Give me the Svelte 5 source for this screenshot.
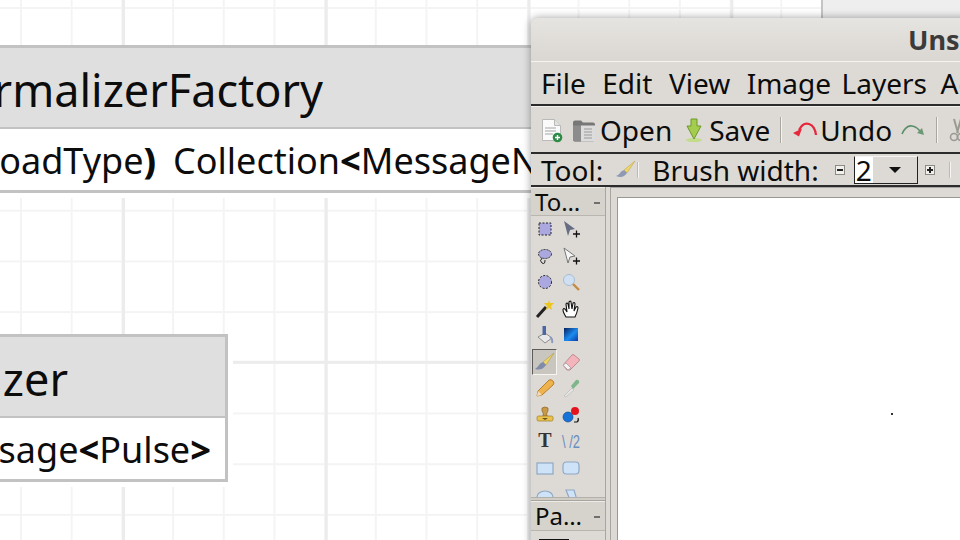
<script>
  const menus = ['File', 'Edit', 'View', 'Image', 'Layers', 'Adjust'];
</script>

<div class="desk">
  <div class="far-window"></div>

  <div class="card card-a">
    <div class="title">MessageNormalizerFactory</div>
    <div class="row"><span class="lead">create(PayloadType<b>)</b></span><span>Collection<b>&lt;</b>MessageNormalizer<b>&lt;</b>Pulse<b>&gt;&gt;</b></span></div>
  </div>

  <div class="card card-b">
    <div class="title">MessageNormalizer</div>
    <div class="row"><span>Message<b>&lt;</b>Pulse<b>&gt;</b></span></div>
  </div>

  <div class="window">
    <div class="titlebar"><span>Unsaved Drawing</span></div>

    <div class="menubar">
      {#each menus as m}
        <span>{m}</span>
      {/each}
    </div>

    <div class="toolbar">
      <svg class="ico new" width="24" height="26" viewBox="0 0 24 26">
        <path d="M2.5 2.5h12l6 6v15h-18z" fill="#fafafa" stroke="#b9b9b9" />
        <path d="M14.5 2.5v6h6" fill="#e4e4e4" stroke="#b9b9b9" />
        <path d="M5 11h11M5 14h11M5 17h8" stroke="#a5a5a5" />
        <circle cx="17.5" cy="20.5" r="4.8" fill="#2e8b47" />
        <path d="M15 20.5h5M17.5 18v5" stroke="#fff" stroke-width="1.4" />
      </svg>
      <svg class="ico folder" width="24" height="26" viewBox="0 0 24 26">
        <path d="M1 5.5q0-2 2-2h6l2 2h10q2 0 2 2v15q0 2-2 2H3q-2 0-2-2z" fill="#777" />
        <path d="M9 8.500h14v16H9z" fill="#dcdcdc" />
        <path d="M12 12h8M12 15h8M12 18h8M12 21h8" stroke="#9a9a9a" />
        <path d="M1 8.500h8v16H3q-2 0-2-2z" fill="#8c8c8c" />
      </svg>
      <span class="tb-label open">Open</span>
      <svg class="ico save" width="18" height="26" viewBox="0 0 18 26">
        <ellipse cx="9" cy="23" rx="8" ry="2" fill="#c3dc8c" />
        <path d="M6 2h6v7h4l-7 13-7-13h4z" fill="#a4cc4e" stroke="#6c9a26" />
      </svg>
      <span class="tb-label save-l">Save</span>
      <i class="sep s1"></i>
      <svg class="ico undo" width="26" height="24" viewBox="0 0 26 24">
        <path d="M7 12q4-8 10-6t7 11" fill="none" stroke="#e6283c" stroke-width="2.200" />
        <path d="M1 15l9-4.500-3 8z" fill="#e6283c" />
      </svg>
      <span class="tb-label undo-l">Undo</span>
      <svg class="ico redo" width="26" height="24" viewBox="0 0 26 24">
        <path d="M2 16q4-9 10-8t9 7" fill="none" stroke="#5b8f6a" stroke-width="1.600" />
        <path d="M24 17l-7-2 5-5z" fill="#6d9878" />
      </svg>
      <i class="sep s2"></i>
      <svg class="ico cut" width="18" height="26" viewBox="0 0 18 26">
        <path d="M5 2l4 14M12 2l-4 14" stroke="#9a9a92" stroke-width="2" />
        <circle cx="5" cy="20" r="3.500" fill="none" stroke="#9a9a92" stroke-width="1.600" />
        <circle cx="12" cy="20" r="3.500" fill="none" stroke="#9a9a92" stroke-width="1.600" />
      </svg>
    </div>

    <div class="options">
      <span class="opt-l tool-l">Tool:</span>
      <svg class="ico brush" width="20" height="20" viewBox="0 0 20 20">
        <path d="M19 1L8 10l3 3z" fill="#ecd56c" stroke="#b79e3c" stroke-width=".5" />
        <path d="M8 10q-3 1-4 3t-4 3q7 3 11-3z" fill="#8e9ab4" />
      </svg>
      <i class="mini-sep"></i>
      <span class="opt-l brush-l">Brush width:</span>
      <span class="step minus"><i></i></span>
      <div class="combo">
        <span class="entry">2</span>
        <span class="drop"><i></i></span>
      </div>
      <span class="step plus"><i></i><i class="v"></i></span>
      <i class="mini-sep far"></i>
    </div>

    <div class="main">
      <div class="dock">
        <div class="panel-head">To… <em></em></div>
        <div class="tools">
          <div class="tool"><svg viewBox="0 0 20 20"><rect x="4" y="4" width="12" height="12" fill="#aaa8de" stroke="#222" stroke-dasharray="2 1.500" /></svg></div>
          <div class="tool"><svg viewBox="0 0 20 20"><path d="M3 2l11 8-5 1-2 6z" fill="#656c84" /><path d="M12 15h7M15.500 11.500v7" stroke="#111" stroke-width="1.300" /></svg></div>

          <div class="tool"><svg viewBox="0 0 20 20"><ellipse cx="10" cy="8" rx="6.500" ry="4.500" fill="#aaa8de" stroke="#333" stroke-dasharray="2 1" /><path d="M7 12q-3 3 0 5t3-3" fill="none" stroke="#222" /></svg></div>
          <div class="tool"><svg viewBox="0 0 20 20"><path d="M3 2l11 8-5 1-2 6z" fill="#f5f5f5" stroke="#777" /><path d="M12 15h7M15.500 11.500v7" stroke="#111" stroke-width="1.300" /></svg></div>

          <div class="tool"><svg viewBox="0 0 20 20"><circle cx="10" cy="10" r="6.500" fill="#aaa8de" stroke="#222" stroke-dasharray="2 1.500" /></svg></div>
          <div class="tool"><svg viewBox="0 0 20 20"><circle cx="8" cy="8" r="5.500" fill="#cfe0f2" stroke="#a9bdd3" /><path d="M12 12l6 6" stroke="#c68a45" stroke-width="2.400" /></svg></div>

          <div class="tool"><svg viewBox="0 0 20 20"><path d="M2 18L11 8" stroke="#222" stroke-width="3" /><path d="M14 1l1 3 4 0-3 3 1 4-3-2-3 2 1-4-3-3h4z" fill="#ecc51f" /></svg></div>
          <div class="tool"><svg viewBox="0 0 20 20"><path d="M5 18q-3-5-3-7t2-1l2 3-1-8q1-2 2 0l1 5 0-7q2-2 2 0l1 7 1-6q2-1 2 1l-1 7 2-4q2-1 2 1-1 5-3 9z" fill="#fff" stroke="#111" stroke-width="1.100" /></svg></div>

          <div class="tool"><svg viewBox="0 0 20 20"><path d="M3 12l7-4 7 5-7 5z" fill="#e8e8e8" stroke="#8e8e8e" /><path d="M7.500 1h3.500v9H7.500z" fill="#4a68a8" /><path d="M15 12q3 2 2 6" fill="none" stroke="#8a9bc0" stroke-width="2" /></svg></div>
          <div class="tool"><svg viewBox="0 0 20 20"><defs><linearGradient id="gr" x1="0" y1="0" x2="1" y2="1"><stop offset="0" stop-color="#06205e" /><stop offset=".55" stop-color="#1b8cf0" /><stop offset="1" stop-color="#0a3aa8" /></linearGradient></defs><rect x="3" y="3" width="14" height="13" fill="url(#gr)" /></svg></div>

          <div class="tool on"><svg viewBox="0 0 20 20"><path d="M19 1L8 10l3 3z" fill="#ecd56c" stroke="#b3993a" stroke-width=".6" /><path d="M8 10q-3 1-4 3t-4 4q7 2 11-4z" fill="#7f8ba8" /></svg></div>
          <div class="tool"><svg viewBox="0 0 20 20"><path d="M2 13l9-10q1-1 2 0l5 4q1 1 0 2l-9 9H6z" fill="#f4b4bc" stroke="#c08a92" /><path d="M2 13l5 5 3-2-5-5z" fill="#f2f2f2" stroke="#b8a8aa" /></svg></div>

          <div class="tool"><svg viewBox="0 0 20 20"><path d="M2 18l1-5L14 2q2-1 4 1t0 4L7 17z" fill="#eeb34c" stroke="#b67f2c" /><path d="M2 18l1-5 4 4z" fill="#f3dcb8" /></svg></div>
          <div class="tool"><svg viewBox="0 0 20 20"><path d="M3 18l8-8 2 2-8 7z" fill="#e4e4e0" stroke="#bbb" stroke-width=".7" /><path d="M10 8l5-6q2-1 3 1t-1 3l-5 5z" fill="#7eb58a" /></svg></div>

          <div class="tool"><svg viewBox="0 0 20 20"><path d="M7 3q3-2 6 0v3q-2 2-1 5h-4q1-3-1-5z" fill="#c89a48" stroke="#8a6624" stroke-width=".7" /><rect x="2" y="11" width="16" height="5" rx="1.500" fill="#eac34e" stroke="#9c7a28" stroke-width=".7" /><path d="M7 13h6l-3 2z" fill="#65501c" /></svg></div>
          <div class="tool"><svg viewBox="0 0 20 20"><circle cx="7" cy="12" r="5" fill="#1673d8" stroke="#0c3f80" stroke-width=".6" /><circle cx="14" cy="6" r="4" fill="#e4141e" /><path d="M13 17h3q2-1 1-4" fill="none" stroke="#111" stroke-width="1.200" /></svg></div>

          <div class="tool"><svg viewBox="0 0 20 20"><text x="10" y="16" text-anchor="middle" class="t-ico">T</text></svg></div>
          <div class="tool"><svg viewBox="0 0 20 20"><text x="1" y="17" textLength="18" lengthAdjust="spacingAndGlyphs" class="c-ico">\ /2</text></svg></div>

          <div class="tool"><svg viewBox="0 0 20 20"><rect x="2" y="5" width="16" height="11" fill="#cfe3f8" stroke="#8fa8c4" stroke-width="1.200" /></svg></div>
          <div class="tool"><svg viewBox="0 0 20 20"><rect x="2" y="4" width="16" height="12" rx="3.500" fill="#cfe3f8" stroke="#8fa8c4" stroke-width="1.200" /></svg></div>

          <div class="tool"><svg viewBox="0 0 20 20"><ellipse cx="10" cy="13" rx="8" ry="6" fill="#cfe3f8" stroke="#8fa8c4" stroke-width="1.200" /></svg></div>
          <div class="tool"><svg viewBox="0 0 20 20"><path d="M5 6h8l3 10H9z" fill="#cfe3f8" stroke="#8fa8c4" stroke-width="1.200" /></svg></div>
        </div>
        <div class="dock-split"></div>
        <div class="panel-head second">Pa… <em></em></div>
        <div class="swatch"></div>
      </div>

      <div class="canvas-frame">
        <div class="canvas"><i class="speck"></i></div>
      </div>
    </div>
  </div>
</div>

<style>
  :global(body) {
    margin: 0;
    overflow: hidden;
    background: #fff;
  }

  .desk {
    position: relative;
    width: 960px;
    height: 540px;
    overflow: hidden;
    font-family: "Noto Sans", sans-serif;
    color: #0c0c0c;
    background-color: #fff;
    background-image:
      linear-gradient(90deg, #ececec 3px, transparent 3px),
      linear-gradient(#ececec 3px, transparent 3px),
      linear-gradient(90deg, #f4f4f4 2px, transparent 2px),
      linear-gradient(#f4f4f4 2px, transparent 2px);
    background-size: 202.8px 100%, 100% 202.8px, 50.7px 100%, 100% 50.7px;
    background-position: 122px 0, 0 158px, 20px 0, 0 7px;
  }

  .far-window {
    position: absolute;
    left: 821px;
    top: 0;
    width: 139px;
    height: 30px;
    background: #eeeeee;
    border-left: 2px solid #c4c4c4;
  }

  /* diagram nodes */
  .card {
    position: absolute;
    box-sizing: border-box;
    border: 3px solid #c2c2c2;
    background: #fff;
    box-shadow: 5px 5px 0 #fff;
    overflow: hidden;
  }

  .card-a {
    left: -300px;
    top: 45px;
    width: 1000px;
    height: 148px;
  }

  .card-b {
    left: -300px;
    top: 334px;
    width: 528px;
    height: 148px;
  }

  .title {
    display: flex;
    justify-content: flex-end;
    height: 79px;
    line-height: 84px;
    font-size: 45px;
    background: #dfdfdf;
    border-bottom: 2px solid #c2c2c2;
    white-space: nowrap;
  }

  .card-a .title {
    padding-right: 374px;
  }

  .card-b .title {
    padding-right: 157px;
  }

  .row {
    display: flex;
    height: 61px;
    line-height: 63px;
    font-size: 36px;
    white-space: nowrap;
  }

  .row b {
    font-weight: 800;
  }

  .lead {
    flex: none;
    width: 453px;
    margin-right: 17px;
    display: flex;
    justify-content: flex-end;
  }

  .card-b .row {
    justify-content: flex-end;
    padding-right: 14px;
  }

  /* paint window */
  .window {
    position: absolute;
    left: 531px;
    top: 18px;
    width: 620px;
    height: 560px;
    background: #dddad5;
    border-radius: 7px 7px 0 0;
    box-shadow: 0 0 9px rgba(0, 0, 0, 0.38);
    overflow: hidden;
  }

  .titlebar {
    box-sizing: border-box;
    height: 44px;
    padding-left: 377px;
    font-size: 27px;
    line-height: 44px;
    font-weight: 700;
    color: #3b3b3b;
    white-space: nowrap;
    border-bottom: 1px solid #f4f3f0;
    background: linear-gradient(#e6e4e0, #dad7d2);
  }

  .menubar {
    box-sizing: border-box;
    display: flex;
    gap: 16.5px;
    height: 44px;
    padding-left: 10px;
    align-items: center;
    font-size: 28px;
    border-bottom: 2px solid #2c2c2c;
  }

  .menubar span:nth-child(5) {
    margin-left: -6px;
  }

  .menubar span:nth-child(6) {
    margin-left: -3px;
  }

  .toolbar {
    box-sizing: border-box;
    display: flex;
    align-items: center;
    height: 48px;
    padding-left: 9px;
    font-size: 28px;
    border-bottom: 2px solid #2c2c2c;
    border-top: 1px solid #f2f1ee;
  }

  .ico {
    flex: none;
    display: block;
  }

  .folder { margin-left: 8px; }
  .open { margin-left: 4px; }
  .save { margin-left: 13px; }
  .save-l { margin-left: 6px; }
  .undo { margin-left: 10px; }
  .undo-l { margin-left: 2px; }
  .redo { margin-left: 8px; }
  .cut { margin-left: 11px; }

  .sep {
    flex: none;
    width: 1px;
    height: 26px;
    background: #a9a69f;
    border-right: 1px solid #f4f3f0;
  }

  .s1 { margin-left: 10px; }
  .s2 { margin-left: 10px; }

  .options {
    box-sizing: border-box;
    display: flex;
    align-items: center;
    height: 33px;
    padding-left: 10px;
    font-size: 28px;
    border-bottom: 2px solid #2c2c2c;
  }

  .brush { margin-left: 13px; }

  .mini-sep {
    flex: none;
    width: 1px;
    height: 16px;
    margin-left: 1px;
    background: #bdbab3;
    border-right: 1px solid #f6f5f3;
  }

  .mini-sep.far { margin-left: 14px; }
  .brush-l { margin-left: 13px; }

  .step {
    position: relative;
    flex: none;
    box-sizing: border-box;
    width: 10px;
    height: 10px;
    background: #f1f0ed;
    border: 1px solid #8c8a85;
  }

  .step i {
    position: absolute;
    left: 1px;
    top: 3px;
    width: 6px;
    height: 2px;
    background: #222;
  }

  .step i.v {
    left: 3px;
    top: 1px;
    width: 2px;
    height: 6px;
  }

  .minus { margin-left: 16px; }
  .plus { margin-left: 7px; }

  .combo {
    flex: none;
    display: flex;
    box-sizing: border-box;
    width: 64px;
    height: 28px;
    margin-left: 9px;
    border-left: 1px solid #222;
    border-right: 1px solid #222;
    border-bottom: 1px solid #222;
    border-top: 1px solid #f5f4f2;
  }

  .entry {
    width: 18px;
    background: #fff;
    font-size: 28px;
    line-height: 27px;
    padding-left: 1px;
    box-sizing: border-box;
  }

  .drop {
    flex: 1;
    display: flex;
    align-items: center;
    justify-content: center;
  }

  .drop i {
    width: 0;
    height: 0;
    border: 6px solid transparent;
    border-top-color: #111;
    border-bottom: 0;
  }

  .main {
    display: flex;
    height: 400px;
  }

  .dock {
    flex: none;
    box-sizing: border-box;
    width: 75px;
    border-right: 1px solid #a8a59f;
  }

  .panel-head {
    position: relative;
    box-sizing: border-box;
    height: 29px;
    padding-left: 4px;
    font-size: 24px;
    line-height: 27px;
    background: #d6d3cd;
    border-top: 1px solid #ecebe7;
    border-bottom: 1px solid #b9b6af;
  }

  .panel-head em {
    position: absolute;
    right: 5px;
    top: 14px;
    width: 6px;
    height: 2px;
    background: #6e6e6e;
  }

  .tools {
    display: grid;
    grid-template-columns: 26px 26px;
    grid-auto-rows: 26.5px;
    height: 281px;
    box-sizing: border-box;
    overflow: hidden;
  }

  .tool {
    display: flex;
    align-items: center;
    justify-content: center;
    box-sizing: border-box;
    margin-left: 1px;
  }

  .tool svg {
    width: 20px;
    height: 20px;
  }

  .tool.on {
    background: #c9c6bf;
    border: 1px solid #5e5c58;
    border-right-color: #f6f5f2;
    border-bottom-color: #f6f5f2;
  }

  .t-ico {
    font-family: "Liberation Serif", serif;
    font-size: 20px;
    font-weight: 700;
    fill: #333;
  }

  .c-ico {
    font-family: "Liberation Sans", sans-serif;
    font-size: 19px;
    fill: #6b8dc0;
  }

  .dock-split {
    height: 4px;
    background: #d0cdc6;
    border-top: 1px solid #b3b0a9;
    border-bottom: 1px solid #a8a59f;
    box-sizing: border-box;
  }

  .panel-head.second {
    height: 30px;
  }

  .swatch {
    width: 28px;
    height: 30px;
    margin: 8px 0 0 8px;
    background: #fff;
    border: 1px solid #111;
  }

  .canvas-frame {
    flex: 1;
    box-sizing: border-box;
    margin-left: 4px;
    padding: 9px 0 0 6px;
    background: #dddad5;
    border-left: 1px solid #a8a59f;
    border-top: 1px solid #a8a59f;
  }

  .canvas {
    position: relative;
    height: 100%;
    background: #fff;
    border-left: 1px solid #9a9892;
    border-top: 1px solid #9a9892;
  }

  .speck {
    position: absolute;
    left: 273px;
    top: 215px;
    width: 2px;
    height: 2px;
    background: #333;
  }
</style>
